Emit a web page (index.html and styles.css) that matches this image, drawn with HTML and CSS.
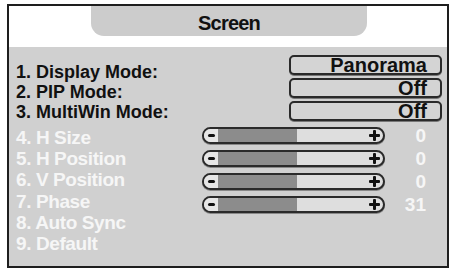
FILE: index.html
```html
<!DOCTYPE html>
<html>
<head>
<meta charset="utf-8">
<link rel="stylesheet" href="styles.css">
</head>
<body>
<div class="frame">
  <div class="header">
    <div class="tab">Screen</div>
  </div>
  <div class="panel">
    <div class="labels">
      <div class="group active">
        <div>1. Display Mode:</div>
        <div>2. PIP Mode:</div>
        <div>3. MultiWin Mode:</div>
      </div>
      <div class="group dim">
        <div>4. H Size</div>
        <div>5. H Position</div>
        <div>6. V Position</div>
        <div>7. Phase</div>
        <div>8. Auto Sync</div>
        <div>9. Default</div>
      </div>
    </div>
    <div class="controls">
      <div class="box">Panorama</div>
      <div class="box">Off</div>
      <div class="box">Off</div>
      <div class="sliders">
        <div class="srow">
          <div class="slider"><span class="minus"></span><span class="fill"></span><span class="rest"></span><span class="plus"></span></div>
          <div class="val">0</div>
        </div>
        <div class="srow">
          <div class="slider"><span class="minus"></span><span class="fill"></span><span class="rest"></span><span class="plus"></span></div>
          <div class="val">0</div>
        </div>
        <div class="srow">
          <div class="slider"><span class="minus"></span><span class="fill"></span><span class="rest"></span><span class="plus"></span></div>
          <div class="val">0</div>
        </div>
        <div class="srow">
          <div class="slider"><span class="minus"></span><span class="fill"></span><span class="rest"></span><span class="plus"></span></div>
          <div class="val">31</div>
        </div>
      </div>
    </div>
  </div>
</div>
</body>
</html>
```
FILE: styles.css
```css
html, body {
  margin: 0;
  padding: 0;
  background: #ffffff;
}
body {
  font-family: "Liberation Sans", Arial, sans-serif;
  font-weight: bold;
}
.frame {
  margin: 4px 0 0 7px;
  width: 438px;
  height: 260px;
  border: 2px solid #1e1e1e;
  display: flex;
  flex-direction: column;
  background: #d0d0d0;
}
.header {
  height: 41px;
  background: #ffffff;
  display: flex;
  justify-content: center;
}
.tab {
  width: 276px;
  height: 30px;
  margin-left: 2px;
  background: #cccccc;
  border-radius: 0 0 13px 13px;
  text-align: center;
  font-size: 20px;
  letter-spacing: -0.8px;
  line-height: 34px;
  color: #111;
}
.panel {
  flex: 1;
  display: flex;
  justify-content: space-between;
  padding: 8px 5px 0 7px;
}
.labels {
  padding-top: 7px;
}
.group.active {
  font-size: 18px;
  line-height: 20.2px;
  color: #111;
}
.group.dim {
  margin-top: 4px;
  font-size: 19px;
  letter-spacing: -0.4px;
  line-height: 21.3px;
  color: #f6f6f6;
}
.controls {
  width: 240px;
  display: flex;
  flex-direction: column;
  align-items: flex-end;
}
.box {
  box-sizing: border-box;
  width: 153px;
  height: 20px;
  margin-bottom: 3px;
  border: 2px solid #2a2a2a;
  border-radius: 5px;
  background: #d4d4d4;
  box-shadow: 0 1px 0 #777;
  font-size: 20px;
  line-height: 17px;
  text-align: right;
  padding-right: 13px;
  color: #111;
}
.sliders {
  width: 240px;
  margin-top: 3px;
  display: flex;
  flex-direction: column;
  gap: 6px;
}
.srow {
  display: flex;
  align-items: center;
  justify-content: space-between;
  padding-right: 16px;
}
.slider {
  box-sizing: border-box;
  width: 183px;
  height: 17px;
  border: 2px solid #2a2a2a;
  border-radius: 9px;
  background: #dedede;
  display: flex;
  align-items: stretch;
  overflow: hidden;
  box-shadow: 0 1px 0 #888;
}
.minus {
  width: 14px;
  position: relative;
  background: #e6e6e6;
}
.minus::after {
  content: "";
  position: absolute;
  left: 4px;
  top: 5px;
  width: 7px;
  height: 3px;
  border-radius: 2px;
  background: #111;
}
.fill {
  width: 79px;
  background: #8c8c8c;
}
.rest {
  flex: 1;
}
.plus {
  width: 15px;
  position: relative;
}
.plus::before, .plus::after {
  content: "";
  position: absolute;
  background: #111;
  border-radius: 1px;
}
.plus::before {
  left: 1px;
  top: 5px;
  width: 11px;
  height: 3px;
}
.plus::after {
  left: 5px;
  top: 1px;
  width: 3px;
  height: 11px;
}
.val {
  font-size: 19px;
  line-height: 17px;
  color: #f6f6f6;
}
```
